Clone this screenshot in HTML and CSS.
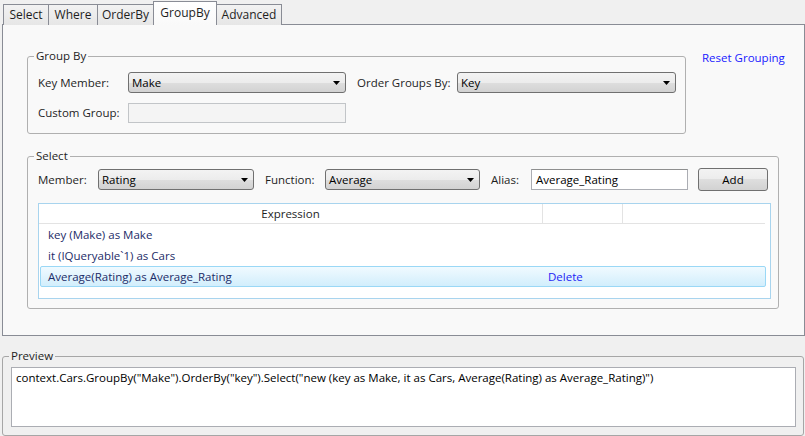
FILE: index.html
```
<!DOCTYPE html>
<html>
<head>
<meta charset="utf-8">
<link rel="stylesheet" href="styles.css">
</head>
<body>
<div class="tabs">
  <div class="tab tab-select">Select</div>
  <div class="tab tab-where">Where</div>
  <div class="tab tab-order">OrderBy</div>
  <div class="tab tab-group active">GroupBy</div>
  <div class="tab tab-adv">Advanced</div>
</div>
<div class="panel">
  <div class="top-row">
    <fieldset class="group gb">
      <legend>Group By</legend>
      <div class="frow">
        <span class="lbl lbl-key">Key Member:</span>
        <div class="combo combo-key"><span class="ctext">Make</span><svg class="arrow" width="7" height="4" viewBox="0 0 7 4"><polygon points="0,0 7,0 3.5,4" fill="#000"/></svg></div>
        <span class="lbl lbl-order">Order Groups By:</span>
        <div class="combo combo-order"><span class="ctext">Key</span><svg class="arrow" width="7" height="4" viewBox="0 0 7 4"><polygon points="0,0 7,0 3.5,4" fill="#000"/></svg></div>
      </div>
      <div class="frow">
        <span class="lbl lbl-key">Custom Group:</span>
        <div class="textbox tb-custom"></div>
      </div>
    </fieldset>
    <span class="link">Reset Grouping</span>
  </div>
  <fieldset class="group sel">
    <legend>Select</legend>
    <div class="srow">
      <span class="lbl lbl-member">Member:</span>
      <div class="combo combo-member"><span class="ctext">Rating</span><svg class="arrow" width="7" height="4" viewBox="0 0 7 4"><polygon points="0,0 7,0 3.5,4" fill="#000"/></svg></div>
      <span class="lbl lbl-func">Function:</span>
      <div class="combo combo-func"><span class="ctext">Average</span><svg class="arrow" width="7" height="4" viewBox="0 0 7 4"><polygon points="0,0 7,0 3.5,4" fill="#000"/></svg></div>
      <span class="lbl lbl-alias">Alias:</span>
      <div class="textbox tb-alias">Average_Rating</div>
      <div class="button btn-add">Add</div>
    </div>
    <div class="list">
      <div class="lhead">
        <div class="hc hc1">Expression</div>
        <div class="hc hc2"></div>
        <div class="hc hc3"></div>
      </div>
      <div class="lrow"><span class="rc1">key (Make) as Make</span></div>
      <div class="lrow"><span class="rc1">it (IQueryable`1) as Cars</span></div>
      <div class="lrow selected"><span class="rc1">Average(Rating) as Average_Rating</span><span class="rc2">Delete</span></div>
    </div>
  </fieldset>
</div>
<fieldset class="group preview">
  <legend>Preview</legend>
  <div class="ptext">context.Cars.GroupBy("Make").OrderBy("key").Select("new (key as Make, it as Cars, Average(Rating) as Average_Rating)")</div>
</fieldset>
</body>
</html>
```
FILE: styles.css
```
html, body {
  margin: 0;
  padding: 0;
}
body {
  background: #f0f0f0;
  font-family: "Open Sans", "Noto Sans", sans-serif;
  font-size: 11.5px;
  line-height: 16px;
  color: #1e1e1e;
  width: 805px;
  height: 436px;
  overflow: hidden;
}
.tabs {
  display: flex;
  align-items: flex-end;
  height: 25px;
  padding-left: 3px;
  box-sizing: border-box;
}
.tab {
  box-sizing: border-box;
  height: 21px;
  border: 1px solid #898c95;
  border-bottom: none;
  margin-left: -1px;
  background: linear-gradient(#f2f2f2, #e6e6e6);
  display: flex;
  align-items: center;
  justify-content: center;
  padding-bottom: 1px;
  font-size: 12px;
}
.tab-select { margin-left: 0; width: 46px; }
.tab-where { width: 50px; }
.tab-order { width: 57px; }
.tab-group { width: 64px; }
.tab-adv { width: 66px; }
.tab.active {
  height: 24px;
  position: relative;
  z-index: 1;
  background: linear-gradient(#ffffff, #f9f9f9);
  padding-bottom: 2px;
}
.panel {
  margin: -1px 0 0 2px;
  width: 803px;
  height: 312px;
  box-sizing: border-box;
  border: 1px solid #898c95;
  background: #f9f9f9;
  padding: 23px 0 0 24px;
}
.group {
  margin: 0;
  border: 1px solid #b0b0b0;
  border-radius: 3px;
  min-width: 0;
  box-sizing: border-box;
}
.group legend {
  padding: 0 2px;
  margin-left: -4px;
  line-height: 16px;
  height: 16px;
}
.top-row {
  display: flex;
  align-items: flex-start;
}
.gb {
  width: 659px;
  padding: 8px 0 10px 10px;
}
.link {
  margin-left: 16px;
  margin-top: 2px;
  color: #1a1aff;
}
.frow {
  display: flex;
  align-items: center;
}
.frow + .frow {
  margin-top: 10px;
}
.lbl-key { width: 90px; }
.lbl-order { width: 100px; margin-left: 11px; }
.combo {
  box-sizing: border-box;
  height: 21px;
  border: 1px solid #707070;
  border-radius: 3px;
  background: linear-gradient(#f3f3f3, #ececec 50%, #dedede 50%, #d2d2d2);
  display: flex;
  align-items: center;
  padding: 0 5px 0 3px;
  color: #000;
}
.ctext { flex: 1; }
.arrow { display: block; }
.combo-key { width: 218px; }
.combo-order { width: 219px; }
.textbox {
  box-sizing: border-box;
  height: 21px;
  border: 1px solid #abadb3;
  border-top-color: #8e8f8f;
  background: #fff;
  padding: 0 4px;
  display: flex;
  align-items: center;
  color: #000;
}
.tb-custom {
  width: 218px;
  height: 20px;
  background: #f4f4f4;
  border-color: #c2c5c8;
}
.group.sel {
  width: 752px;
  margin-top: 14px;
  padding: 4px 0 9px 10px;
}
.srow {
  display: flex;
  align-items: center;
  height: 23px;
}
.lbl-member { width: 60px; }
.combo-member { width: 156px; }
.lbl-func { width: 60px; margin-left: 11px; }
.combo-func { width: 155px; }
.lbl-alias { width: 40px; margin-left: 11px; }
.tb-alias { width: 157px; }
.button {
  box-sizing: border-box;
  height: 23px;
  width: 70px;
  margin-left: 10px;
  border: 1px solid #707070;
  border-radius: 3px;
  background: linear-gradient(#f3f3f3, #ececec 50%, #dedede 50%, #d2d2d2);
  display: flex;
  align-items: center;
  justify-content: center;
  color: #000;
}
.list {
  margin-top: 12px;
  width: 733px;
  height: 96px;
  box-sizing: border-box;
  border: 1px solid #a8d4ee;
  background: #fff;
}
.lhead {
  display: flex;
  height: 20px;
  box-sizing: border-box;
  border-bottom: 1px solid #e3e3e3;
  width: 726px;
}
.hc {
  box-sizing: border-box;
  height: 19px;
  display: flex;
  align-items: center;
  justify-content: center;
}
.hc1 { width: 504px; border-right: 1px solid #e3e3e3; }
.hc2 { width: 80px; border-right: 1px solid #e3e3e3; }
.hc3 { width: 142px; }
.lrow {
  box-sizing: border-box;
  height: 21px;
  margin-left: 1px;
  width: 726px;
  border: 1px solid transparent;
  border-radius: 2px;
  display: flex;
  align-items: center;
  color: #1d2c68;
}
.rc1 {
  width: 501px;
  padding-left: 7px;
  box-sizing: border-box;
}
.rc2 {
  padding-left: 6px;
  color: #2323f5;
}
.lrow.selected {
  border-color: #9ad8f6;
  background: linear-gradient(#f0faff, #d2eefc);
}
.group.preview {
  margin: 12px 0 0 2px;
  width: 802px;
  padding: 3px 0 8px 8px;
  border-color: #a6a6a6;
}
.group.preview legend {
  margin-left: -2px;
}
.ptext {
  box-sizing: border-box;
  width: 785px;
  height: 60px;
  border: 1px solid #abadb3;
  background: #fff;
  padding: 2px 4px;
  color: #000;
}
```
